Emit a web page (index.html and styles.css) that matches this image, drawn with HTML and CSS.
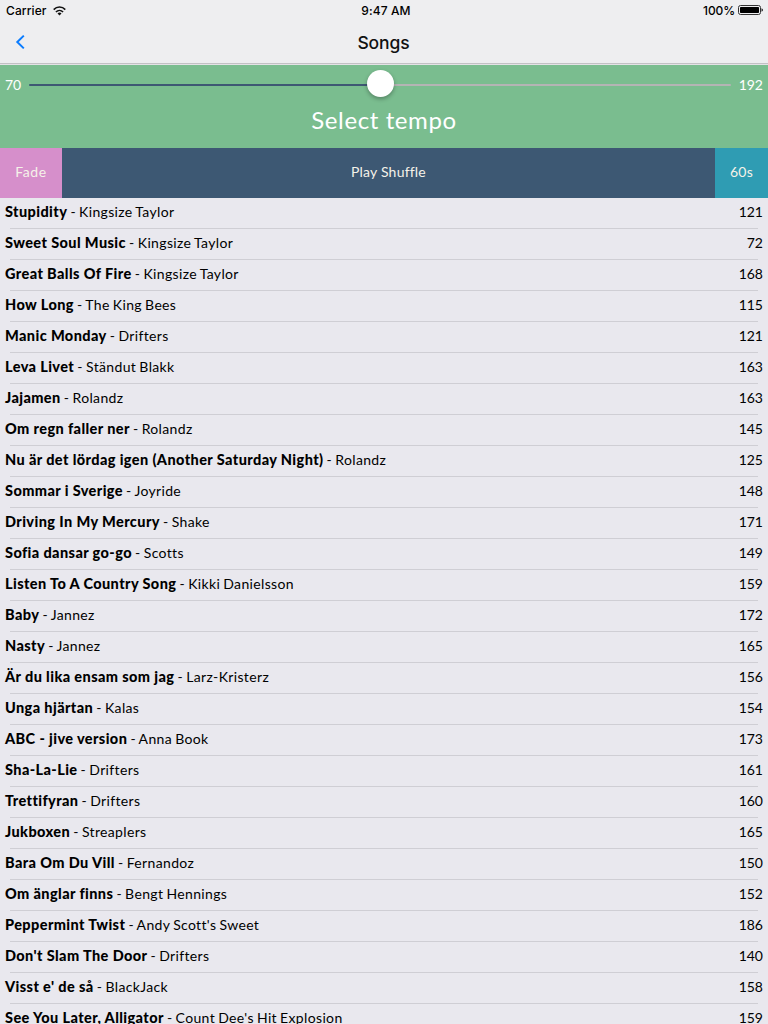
FILE: index.html
```html
<!DOCTYPE html>
<html lang="en">
<head>
<meta charset="utf-8">
<title>Songs</title>
<link rel="stylesheet" href="styles.css">
</head>
<body>
<header class="top">
  <div class="status">
    <div class="carrier"><span>Carrier</span>
      <svg class="wifi" width="13" height="10" viewBox="0 0 13 10"><g fill="none" stroke="#111" stroke-width="1.6"><path d="M.7 3.6C4 .2 9 .2 12.3 3.6"/><path d="M2.9 6C5 3.9 8 3.9 10.1 6"/></g><path d="M6.5 9.5 4.5 7.4Q6.5 5.8 8.5 7.4Z" fill="#111"/></svg>
    </div>
    <div class="clock">9:47 AM</div>
    <div class="power"><span>100%</span>
      <svg width="25" height="10" viewBox="0 0 25 10"><rect x=".5" y=".5" width="22" height="9" rx="2" fill="none" stroke="#333"/><rect x="2" y="2" width="19" height="6" rx=".7" fill="#000"/><path d="M23.5 3.2Q25 3.7 25 5T23.5 6.8Z" fill="#222"/></svg>
    </div>
  </div>
  <nav class="nav">
    <svg class="back" width="10" height="16" viewBox="0 0 10 16"><path d="M8.8 1.6 2.3 8l6.5 6.4" fill="none" stroke="#0a7cff" stroke-width="2"/></svg>
    <h1 class="title">Songs</h1>
    <span></span>
  </nav>
</header>
<section class="tempo">
  <div class="slider">
    <span class="min">70</span>
    <div class="track"><div class="knob"></div></div>
    <span class="max">192</span>
  </div>
  <div class="prompt"><span>Select tempo</span></div>
</section>
<div class="actions">
  <div class="fade">Fade</div>
  <div class="shuffle">Play Shuffle</div>
  <div class="length">60s</div>
</div>
<main class="songs">
  <div class="song"><p><b>Stupidity</b> - Kingsize Taylor</p><span>121</span></div>
  <div class="song"><p><b>Sweet Soul Music</b> - Kingsize Taylor</p><span>72</span></div>
  <div class="song"><p><b>Great Balls Of Fire</b> - Kingsize Taylor</p><span>168</span></div>
  <div class="song"><p><b>How Long</b> - The King Bees</p><span>115</span></div>
  <div class="song"><p><b>Manic Monday</b> - Drifters</p><span>121</span></div>
  <div class="song"><p><b>Leva Livet</b> - Ständut Blakk</p><span>163</span></div>
  <div class="song"><p><b>Jajamen</b> - Rolandz</p><span>163</span></div>
  <div class="song"><p><b>Om regn faller ner</b> - Rolandz</p><span>145</span></div>
  <div class="song"><p><b>Nu är det lördag igen (Another Saturday Night)</b> - Rolandz</p><span>125</span></div>
  <div class="song"><p><b>Sommar i Sverige</b> - Joyride</p><span>148</span></div>
  <div class="song"><p><b>Driving In My Mercury</b> - Shake</p><span>171</span></div>
  <div class="song"><p><b>Sofia dansar go-go</b> - Scotts</p><span>149</span></div>
  <div class="song"><p><b>Listen To A Country Song</b> - Kikki Danielsson</p><span>159</span></div>
  <div class="song"><p><b>Baby</b> - Jannez</p><span>172</span></div>
  <div class="song"><p><b>Nasty</b> - Jannez</p><span>165</span></div>
  <div class="song"><p><b>Är du lika ensam som jag</b> - Larz-Kristerz</p><span>156</span></div>
  <div class="song"><p><b>Unga hjärtan</b> - Kalas</p><span>154</span></div>
  <div class="song"><p><b>ABC - jive version</b> - Anna Book</p><span>173</span></div>
  <div class="song"><p><b>Sha-La-Lie</b> - Drifters</p><span>161</span></div>
  <div class="song"><p><b>Trettifyran</b> - Drifters</p><span>160</span></div>
  <div class="song"><p><b>Jukboxen</b> - Streaplers</p><span>165</span></div>
  <div class="song"><p><b>Bara Om Du Vill</b> - Fernandoz</p><span>150</span></div>
  <div class="song"><p><b>Om änglar finns</b> - Bengt Hennings</p><span>152</span></div>
  <div class="song"><p><b>Peppermint Twist</b> - Andy Scott's Sweet</p><span>186</span></div>
  <div class="song"><p><b>Don't Slam The Door</b> - Drifters</p><span>140</span></div>
  <div class="song"><p><b>Visst e' de så</b> - BlackJack</p><span>158</span></div>
  <div class="song"><p><b>See You Later, Alligator</b> - Count Dee's Hit Explosion</p><span>159</span></div>
</main>
</body>
</html>
```

FILE: styles.css
```css
* { box-sizing: border-box; }
html, body { margin: 0; height: 1024px; overflow: hidden; }
body {
  display: flex;
  flex-direction: column;
  width: 768px;
  background: #e9e8ee;
  color: #000;
  font-family: Lato, "Noto Sans", sans-serif;
  font-size: 14px;
}
.top {
  flex: none;
  height: 65px;
  background: #eeeef0;
  border-bottom: 1px solid #e4e2e6;
  box-shadow: inset 0 -1px #c2c1c4;
  font-family: Inter, sans-serif;
}
.status {
  display: grid;
  grid-template-columns: 1fr auto 1fr;
  align-items: center;
  height: 20px;
  padding: 1px 5px 0 6px;
  font-size: 12px;
  font-weight: 500;
  letter-spacing: 0.1px;
}
.carrier, .power { display: flex; align-items: center; }
.carrier { gap: 6px; }
.power { justify-content: flex-end; gap: 3px; letter-spacing: -0.1px; }
.power svg { margin-top: -1px; }
.clock { padding-left: 3px; }
.nav {
  display: grid;
  grid-template-columns: 1fr auto 1fr;
  align-items: center;
  height: 44px;
  padding: 1px 16px 0 15px;
}
.back { margin-top: -2px; }
.title { margin: 0; font-size: 17.5px; font-weight: 500; line-height: 20px; letter-spacing: -0.1px; color: #111; }
.tempo { flex: none; height: 83px; background: #7abd8f; color: #fff; }
.slider { display: flex; align-items: center; height: 40px; padding: 0 5px; }
.min, .max { padding-bottom: 2px; }
.min { width: 24px; }
.max { width: 32px; text-align: right; }
.track {
  position: relative;
  flex: 1;
  height: 2px;
  border-radius: 1px;
  background: linear-gradient(to right, #3e5873 351px, #b4b4b4 351px);
}
.knob {
  position: absolute;
  left: 338px;
  top: -14px;
  width: 27px;
  height: 27px;
  border-radius: 50%;
  background: #fff;
  box-shadow: 0 2px 4px rgba(0, 0, 0, 0.3);
}
.prompt { text-align: center; font-size: 24px; line-height: 30px; letter-spacing: 0.6px; }
.actions {
  display: grid;
  grid-template-columns: 62px 1fr 53px;
  flex: none;
  height: 50px;
  line-height: 48px;
  text-align: center;
  color: #f5f2e9;
  letter-spacing: 0.2px;
}
.fade { background: #d68fcb; letter-spacing: 0.6px; }
.shuffle { background: #3d5873; }
.length { background: #2f9cb3; }
.songs { flex: 1; overflow: hidden; }
.song {
  display: flex;
  justify-content: space-between;
  height: 31px;
  padding: 0 5px;
  line-height: 28px;
  background: linear-gradient(#cfced4, #cfced4) 10px 30px / 748px 1px no-repeat;
}
.song p { margin: 0; letter-spacing: 0.35px; word-spacing: -0.8px; }
.song b { font-weight: 900; font-size: 14.5px; line-height: 1; letter-spacing: 0.4px; word-spacing: 0; }
```
